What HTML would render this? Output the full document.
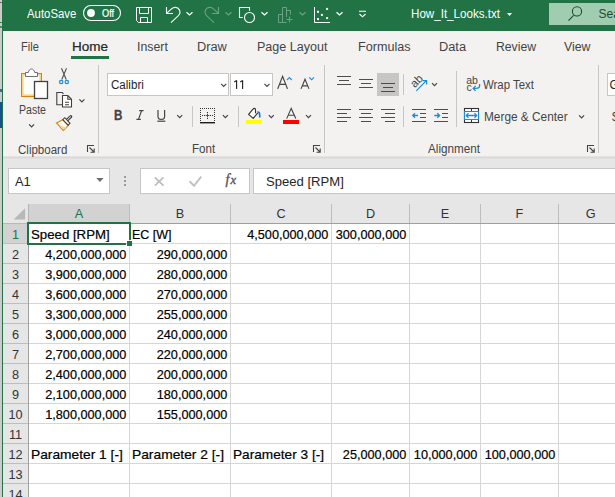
<!DOCTYPE html>
<html><head><meta charset="utf-8">
<style>
html,body{margin:0;padding:0;}
body{width:615px;height:497px;overflow:hidden;position:relative;font-family:"Liberation Sans", sans-serif;background:#e6e6e6;}
body>div,body>span{position:absolute;}
.t{position:absolute;white-space:nowrap;line-height:normal;}
.hdr{position:absolute;font-size:12.7px;text-align:center;line-height:normal;}
svg.ov{position:absolute;left:0;top:0;}
</style></head><body>
<div style="left:0px;top:0px;width:615px;height:497px;background:#e6e6e6;"></div><div style="left:0px;top:0px;width:615px;height:31px;background:#217346;"></div><div style="left:3px;top:31px;width:612px;height:126px;background:#f3f2f1;"></div><div style="left:3px;top:156px;width:612px;height:1px;background:#e4e3e2;"></div><div style="left:3px;top:157px;width:612px;height:1px;background:#d9d9d9;"></div><div style="left:3px;top:158px;width:612px;height:1px;background:#e0e0e0;"></div><span class="t" style="left:26.50px;top:7.03px;font-size:12px;color:#ffffff;transform:scaleX(0.9472);transform-origin:0 0;">AutoSave</span><span class="t" style="left:102.40px;top:7.74px;font-size:10px;color:#ffffff;transform:scaleX(0.9167);transform-origin:0 0;-webkit-text-stroke:0.2px #fff;">Off</span><span class="t" style="left:410.50px;top:7.23px;font-size:12px;color:#ffffff;transform:scaleX(0.9669);transform-origin:0 0;">How_It_Looks.txt</span><div style="left:549px;top:3px;width:66px;height:22px;background:#a0ccb0;"></div><span class="t" style="left:598.60px;top:6.73px;font-size:12px;color:#1d4b2e;">Sea</span><span class="t" style="left:20.50px;top:40.03px;font-size:12px;color:#444444;transform:scaleX(0.9199);transform-origin:0 0;">File</span><span class="t" style="left:71.80px;top:40.03px;font-size:12px;color:#262626;transform:scaleX(1.1250);transform-origin:0 0;-webkit-text-stroke:0.2px #262626;">Home</span><div style="left:71px;top:56px;width:38px;height:3px;background:#217346;"></div><span class="t" style="left:136.50px;top:40.03px;font-size:12px;color:#444444;transform:scaleX(1.0267);transform-origin:0 0;">Insert</span><span class="t" style="left:197.30px;top:40.03px;font-size:12px;color:#444444;transform:scaleX(1.0660);transform-origin:0 0;">Draw</span><span class="t" style="left:257.20px;top:40.03px;font-size:12px;color:#444444;transform:scaleX(1.0460);transform-origin:0 0;">Page Layout</span><span class="t" style="left:358.00px;top:40.03px;font-size:12px;color:#444444;transform:scaleX(1.0520);transform-origin:0 0;">Formulas</span><span class="t" style="left:439.40px;top:40.03px;font-size:12px;color:#444444;transform:scaleX(1.0669);transform-origin:0 0;">Data</span><span class="t" style="left:495.70px;top:40.03px;font-size:12px;color:#444444;transform:scaleX(1.0178);transform-origin:0 0;">Review</span><span class="t" style="left:563.70px;top:40.03px;font-size:12px;color:#444444;transform:scaleX(1.0290);transform-origin:0 0;">View</span><div style="left:98px;top:65px;width:1px;height:88px;background:#c8c6c4;"></div><div style="left:324px;top:65px;width:1px;height:88px;background:#c8c6c4;"></div><div style="left:598px;top:65px;width:1px;height:88px;background:#c8c6c4;"></div><div style="left:192px;top:106px;width:1px;height:21px;background:#c8c6c4;"></div><div style="left:238px;top:106px;width:1px;height:21px;background:#c8c6c4;"></div><div style="left:403px;top:74px;width:1px;height:21px;background:#c8c6c4;"></div><div style="left:403px;top:106px;width:1px;height:21px;background:#c8c6c4;"></div><div style="left:456px;top:71px;width:1px;height:56px;background:#c8c6c4;"></div><span class="t" style="left:18.70px;top:103.13px;font-size:12px;color:#444444;transform:scaleX(0.8795);transform-origin:0 0;">Paste</span><span class="t" style="left:17.90px;top:142.73px;font-size:12px;color:#444444;transform:scaleX(0.9601);transform-origin:0 0;">Clipboard</span><div style="left:107px;top:73px;width:122px;height:23px;background:#ffffff;box-sizing:border-box;border:1px solid #c8c6c4;"></div><span class="t" style="left:110.60px;top:78.03px;font-size:12px;color:#262626;transform:scaleX(0.9647);transform-origin:0 0;">Calibri</span><div style="left:230px;top:73px;width:43px;height:23px;background:#ffffff;box-sizing:border-box;border:1px solid #c8c6c4;"></div><span class="t" style="left:114.20px;top:106.76px;font-size:14.5px;color:#444444;font-weight:bold;transform:scaleX(0.8038);transform-origin:0 0;-webkit-text-stroke:0.3px #444;">B</span><div style="left:200px;top:122px;width:15px;height:1px;background:#1e1e1e;"></div><div style="left:200px;top:123px;width:15px;height:1px;background:#9a9a9a;"></div><div style="left:246px;top:120px;width:16px;height:4px;background:#ffff00;"></div><div style="left:283px;top:120px;width:16px;height:4px;background:#ff0000;"></div><span class="t" style="left:191.60px;top:142.23px;font-size:12px;color:#444444;transform:scaleX(0.9667);transform-origin:0 0;">Font</span><div style="left:377px;top:73px;width:22px;height:23px;background:#c8c6c4;"></div><div style="left:337px;top:76px;width:14px;height:1px;background:#444444;opacity:0.95;"></div><div style="left:339px;top:80px;width:10px;height:1px;background:#444444;opacity:0.95;"></div><div style="left:337px;top:84px;width:14px;height:1px;background:#444444;opacity:0.95;"></div><div style="left:359px;top:79px;width:14px;height:1px;background:#444444;opacity:0.95;"></div><div style="left:361px;top:83px;width:10px;height:1px;background:#444444;opacity:0.95;"></div><div style="left:359px;top:87px;width:14px;height:1px;background:#444444;opacity:0.95;"></div><div style="left:381px;top:83px;width:14px;height:1px;background:#444444;opacity:0.95;"></div><div style="left:383px;top:87px;width:10px;height:1px;background:#444444;opacity:0.95;"></div><div style="left:381px;top:91px;width:14px;height:1px;background:#444444;opacity:0.95;"></div><div style="left:337px;top:109px;width:14px;height:1px;background:#444444;opacity:0.95;"></div><div style="left:337px;top:113px;width:10px;height:1px;background:#444444;opacity:0.95;"></div><div style="left:337px;top:117px;width:14px;height:1px;background:#444444;opacity:0.95;"></div><div style="left:337px;top:121px;width:10px;height:1px;background:#444444;opacity:0.95;"></div><div style="left:359px;top:109px;width:14px;height:1px;background:#444444;opacity:0.95;"></div><div style="left:361px;top:113px;width:10px;height:1px;background:#444444;opacity:0.95;"></div><div style="left:359px;top:117px;width:14px;height:1px;background:#444444;opacity:0.95;"></div><div style="left:361px;top:121px;width:10px;height:1px;background:#444444;opacity:0.95;"></div><div style="left:381px;top:109px;width:14px;height:1px;background:#444444;opacity:0.95;"></div><div style="left:385px;top:113px;width:10px;height:1px;background:#444444;opacity:0.95;"></div><div style="left:381px;top:117px;width:14px;height:1px;background:#444444;opacity:0.95;"></div><div style="left:385px;top:121px;width:10px;height:1px;background:#444444;opacity:0.95;"></div><span class="t" style="left:410px;top:75px;font-size:11.5px;color:#444;transform:rotate(-45deg);transform-origin:50% 50%;">ab</span><div style="left:412px;top:109px;width:14px;height:1px;background:#444444;opacity:0.95;"></div><div style="left:412px;top:121px;width:14px;height:1px;background:#444444;opacity:0.95;"></div><div style="left:420px;top:113px;width:6px;height:1px;background:#444444;opacity:0.95;"></div><div style="left:420px;top:117px;width:6px;height:1px;background:#444444;opacity:0.95;"></div><div style="left:434px;top:109px;width:14px;height:1px;background:#444444;opacity:0.95;"></div><div style="left:434px;top:121px;width:14px;height:1px;background:#444444;opacity:0.95;"></div><div style="left:442px;top:113px;width:6px;height:1px;background:#444444;opacity:0.95;"></div><div style="left:442px;top:117px;width:6px;height:1px;background:#444444;opacity:0.95;"></div><span class="t" style="left:466.2px;top:73.6px;font-size:10.5px;color:#444;letter-spacing:0px;">ab</span><span class="t" style="left:466.4px;top:81.2px;font-size:10.5px;color:#444;">c</span><span class="t" style="left:483.20px;top:78.43px;font-size:12px;color:#444444;transform:scaleX(0.9515);transform-origin:0 0;">Wrap Text</span><span class="t" style="left:483.80px;top:110.43px;font-size:12px;color:#444444;transform:scaleX(0.9870);transform-origin:0 0;">Merge &amp; Center</span><span class="t" style="left:427.50px;top:141.83px;font-size:12px;color:#444444;transform:scaleX(0.9747);transform-origin:0 0;">Alignment</span><div style="left:607px;top:73px;width:10px;height:23px;background:#ffffff;box-sizing:border-box;border:1px solid #c8c6c4;"></div><span class="t" style="left:609.50px;top:78.03px;font-size:12px;color:#262626;">G</span><span class="t" style="left:612.00px;top:110.13px;font-size:12px;color:#444444;">$</span><div style="left:8px;top:168px;width:102px;height:26px;background:#ffffff;box-sizing:border-box;border:1px solid #c6c6c6;"></div><span class="t" style="left:15.00px;top:174.32px;font-size:13px;color:#262626;transform:scaleX(0.9937);transform-origin:0 0;">A1</span><div style="left:124px;top:175.6px;width:2px;height:2px;background:#9a9a9a;"></div><div style="left:124px;top:179.8px;width:2px;height:2px;background:#9a9a9a;"></div><div style="left:124px;top:184px;width:2px;height:2px;background:#9a9a9a;"></div><div style="left:140px;top:168px;width:110px;height:26px;background:#ffffff;box-sizing:border-box;border:1px solid #c6c6c6;"></div><span class="t" style="left:225.5px;top:172.3px;font-size:14px;color:#555;-webkit-text-stroke:0.35px #555;font-family:'Liberation Serif',serif;font-style:italic;">f<span style="font-size:12.5px;margin-left:1.2px">x</span></span><div style="left:253px;top:168px;width:370px;height:26px;background:#ffffff;box-sizing:border-box;border:1px solid #c6c6c6;"></div><span class="t" style="left:265.50px;top:174.22px;font-size:13px;color:#262626;transform:scaleX(1.0065);transform-origin:0 0;">Speed [RPM]</span><div style="left:29px;top:224px;width:586px;height:273px;background:#ffffff;"></div><div style="left:29px;top:204px;width:100px;height:19px;background:#d2d2d2;"></div><div style="left:3px;top:224px;width:25px;height:19px;background:#d2d2d2;"></div><div style="left:3px;top:223px;width:25px;height:1px;background:#b8b8b8;"></div><div style="left:28px;top:223px;width:587px;height:1px;background:#9f9f9f;"></div><div style="left:28px;top:204px;width:1px;height:19px;background:#b4b4b4;"></div><div style="left:28px;top:224px;width:1px;height:273px;background:#9f9f9f;"></div><div style="left:129px;top:204px;width:1px;height:19px;background:#bdbdbd;"></div><div style="left:230px;top:204px;width:1px;height:19px;background:#bdbdbd;"></div><div style="left:331px;top:204px;width:1px;height:19px;background:#bdbdbd;"></div><div style="left:409px;top:204px;width:1px;height:19px;background:#bdbdbd;"></div><div style="left:480px;top:204px;width:1px;height:19px;background:#bdbdbd;"></div><div style="left:558px;top:204px;width:1px;height:19px;background:#bdbdbd;"></div><div style="left:129px;top:224px;width:1px;height:273px;background:#d6d6d6;"></div><div style="left:230px;top:224px;width:1px;height:273px;background:#d6d6d6;"></div><div style="left:331px;top:224px;width:1px;height:273px;background:#d6d6d6;"></div><div style="left:409px;top:224px;width:1px;height:273px;background:#d6d6d6;"></div><div style="left:480px;top:224px;width:1px;height:273px;background:#d6d6d6;"></div><div style="left:558px;top:224px;width:1px;height:273px;background:#d6d6d6;"></div><div style="left:29px;top:243px;width:586px;height:1px;background:#d6d6d6;"></div><div style="left:3px;top:243px;width:25px;height:1px;background:#bdbdbd;"></div><div style="left:29px;top:263px;width:586px;height:1px;background:#d6d6d6;"></div><div style="left:3px;top:263px;width:25px;height:1px;background:#bdbdbd;"></div><div style="left:29px;top:283px;width:586px;height:1px;background:#d6d6d6;"></div><div style="left:3px;top:283px;width:25px;height:1px;background:#bdbdbd;"></div><div style="left:29px;top:303px;width:586px;height:1px;background:#d6d6d6;"></div><div style="left:3px;top:303px;width:25px;height:1px;background:#bdbdbd;"></div><div style="left:29px;top:323px;width:586px;height:1px;background:#d6d6d6;"></div><div style="left:3px;top:323px;width:25px;height:1px;background:#bdbdbd;"></div><div style="left:29px;top:343px;width:586px;height:1px;background:#d6d6d6;"></div><div style="left:3px;top:343px;width:25px;height:1px;background:#bdbdbd;"></div><div style="left:29px;top:363px;width:586px;height:1px;background:#d6d6d6;"></div><div style="left:3px;top:363px;width:25px;height:1px;background:#bdbdbd;"></div><div style="left:29px;top:383px;width:586px;height:1px;background:#d6d6d6;"></div><div style="left:3px;top:383px;width:25px;height:1px;background:#bdbdbd;"></div><div style="left:29px;top:403px;width:586px;height:1px;background:#d6d6d6;"></div><div style="left:3px;top:403px;width:25px;height:1px;background:#bdbdbd;"></div><div style="left:29px;top:423px;width:586px;height:1px;background:#d6d6d6;"></div><div style="left:3px;top:423px;width:25px;height:1px;background:#bdbdbd;"></div><div style="left:29px;top:443px;width:586px;height:1px;background:#d6d6d6;"></div><div style="left:3px;top:443px;width:25px;height:1px;background:#bdbdbd;"></div><div style="left:29px;top:463px;width:586px;height:1px;background:#d6d6d6;"></div><div style="left:3px;top:463px;width:25px;height:1px;background:#bdbdbd;"></div><div style="left:29px;top:483px;width:586px;height:1px;background:#d6d6d6;"></div><div style="left:3px;top:483px;width:25px;height:1px;background:#bdbdbd;"></div><div class="hdr" style="left:49.0px;top:207px;width:60px;color:#217346">A</div><div class="hdr" style="left:150.0px;top:207px;width:60px;color:#333333">B</div><div class="hdr" style="left:251.0px;top:207px;width:60px;color:#333333">C</div><div class="hdr" style="left:340.5px;top:207px;width:60px;color:#333333">D</div><div class="hdr" style="left:415.0px;top:207px;width:60px;color:#333333">E</div><div class="hdr" style="left:489.5px;top:207px;width:60px;color:#333333">F</div><div class="hdr" style="left:560.7px;top:207px;width:60px;color:#333333">G</div><div class="hdr" style="left:3px;top:228px;width:25px;color:#217346">1</div><div class="hdr" style="left:3px;top:248px;width:25px;color:#333333">2</div><div class="hdr" style="left:3px;top:268px;width:25px;color:#333333">3</div><div class="hdr" style="left:3px;top:288px;width:25px;color:#333333">4</div><div class="hdr" style="left:3px;top:308px;width:25px;color:#333333">5</div><div class="hdr" style="left:3px;top:328px;width:25px;color:#333333">6</div><div class="hdr" style="left:3px;top:348px;width:25px;color:#333333">7</div><div class="hdr" style="left:3px;top:368px;width:25px;color:#333333">8</div><div class="hdr" style="left:3px;top:388px;width:25px;color:#333333">9</div><div class="hdr" style="left:3px;top:408px;width:25px;color:#333333">10</div><div class="hdr" style="left:3px;top:428px;width:25px;color:#333333">11</div><div class="hdr" style="left:3px;top:448px;width:25px;color:#333333">12</div><div class="hdr" style="left:3px;top:468px;width:25px;color:#333333">13</div><div class="hdr" style="left:3px;top:488px;width:25px;color:#333333">14</div><span class="t" style="left:31.30px;top:227.69px;font-size:12.7px;color:#000000;transform:scaleX(1.0430);transform-origin:0 0;-webkit-text-stroke:0.2px #000;">Speed [RPM]</span><span class="t" style="left:132.30px;top:227.69px;font-size:12.7px;color:#000000;transform:scaleX(0.9826);transform-origin:0 0;-webkit-text-stroke:0.2px #000;">EC [W]</span><span class="t" style="left:247.20px;top:227.69px;font-size:12.7px;color:#000000;-webkit-text-stroke:0.2px #000;">4,500,000,000</span><span class="t" style="left:335.75px;top:227.69px;font-size:12.7px;color:#000000;-webkit-text-stroke:0.2px #000;">300,000,000</span><span class="t" style="left:31.30px;top:447.69px;font-size:12.7px;color:#000000;transform:scaleX(1.0850);transform-origin:0 0;-webkit-text-stroke:0.2px #000;">Parameter 1 [-]</span><span class="t" style="left:132.30px;top:447.69px;font-size:12.7px;color:#000000;transform:scaleX(1.0874);transform-origin:0 0;-webkit-text-stroke:0.2px #000;">Parameter 2 [-]</span><span class="t" style="left:233.30px;top:447.69px;font-size:12.7px;color:#000000;transform:scaleX(1.0756);transform-origin:0 0;-webkit-text-stroke:0.2px #000;">Parameter 3 [-]</span><span class="t" style="left:342.85px;top:447.69px;font-size:12.7px;color:#000000;-webkit-text-stroke:0.2px #000;">25,000,000</span><span class="t" style="left:413.85px;top:447.69px;font-size:12.7px;color:#000000;-webkit-text-stroke:0.2px #000;">10,000,000</span><span class="t" style="left:484.75px;top:447.69px;font-size:12.7px;color:#000000;-webkit-text-stroke:0.2px #000;">100,000,000</span><span class="t" style="left:45.20px;top:247.69px;font-size:12.7px;color:#000000;-webkit-text-stroke:0.2px #000;">4,200,000,000</span><span class="t" style="left:156.75px;top:247.69px;font-size:12.7px;color:#000000;-webkit-text-stroke:0.2px #000;">290,000,000</span><span class="t" style="left:45.20px;top:267.69px;font-size:12.7px;color:#000000;-webkit-text-stroke:0.2px #000;">3,900,000,000</span><span class="t" style="left:156.75px;top:267.69px;font-size:12.7px;color:#000000;-webkit-text-stroke:0.2px #000;">280,000,000</span><span class="t" style="left:45.20px;top:287.69px;font-size:12.7px;color:#000000;-webkit-text-stroke:0.2px #000;">3,600,000,000</span><span class="t" style="left:156.75px;top:287.69px;font-size:12.7px;color:#000000;-webkit-text-stroke:0.2px #000;">270,000,000</span><span class="t" style="left:45.20px;top:307.69px;font-size:12.7px;color:#000000;-webkit-text-stroke:0.2px #000;">3,300,000,000</span><span class="t" style="left:156.75px;top:307.69px;font-size:12.7px;color:#000000;-webkit-text-stroke:0.2px #000;">255,000,000</span><span class="t" style="left:45.20px;top:327.69px;font-size:12.7px;color:#000000;-webkit-text-stroke:0.2px #000;">3,000,000,000</span><span class="t" style="left:156.75px;top:327.69px;font-size:12.7px;color:#000000;-webkit-text-stroke:0.2px #000;">240,000,000</span><span class="t" style="left:45.20px;top:347.69px;font-size:12.7px;color:#000000;-webkit-text-stroke:0.2px #000;">2,700,000,000</span><span class="t" style="left:156.75px;top:347.69px;font-size:12.7px;color:#000000;-webkit-text-stroke:0.2px #000;">220,000,000</span><span class="t" style="left:45.20px;top:367.69px;font-size:12.7px;color:#000000;-webkit-text-stroke:0.2px #000;">2,400,000,000</span><span class="t" style="left:156.75px;top:367.69px;font-size:12.7px;color:#000000;-webkit-text-stroke:0.2px #000;">200,000,000</span><span class="t" style="left:45.20px;top:387.69px;font-size:12.7px;color:#000000;-webkit-text-stroke:0.2px #000;">2,100,000,000</span><span class="t" style="left:156.75px;top:387.69px;font-size:12.7px;color:#000000;-webkit-text-stroke:0.2px #000;">180,000,000</span><span class="t" style="left:45.20px;top:407.69px;font-size:12.7px;color:#000000;-webkit-text-stroke:0.2px #000;">1,800,000,000</span><span class="t" style="left:156.75px;top:407.69px;font-size:12.7px;color:#000000;-webkit-text-stroke:0.2px #000;">155,000,000</span><div style="left:27px;top:222px;width:104px;height:2px;background:#217346;"></div><div style="left:27px;top:243px;width:99px;height:2px;background:#217346;"></div><div style="left:27px;top:222px;width:2px;height:23px;background:#217346;"></div><div style="left:129px;top:222px;width:2px;height:18px;background:#217346;"></div><div style="left:127px;top:241px;width:5px;height:5px;background:#217346;"></div><div style="left:126px;top:240px;width:1px;height:1px;background:#ffffff;"></div><div style="left:0px;top:0px;width:2px;height:497px;background:#cbcbcb;"></div><div style="left:0px;top:2px;width:2px;height:1px;background:#6a6a6a;"></div><div style="left:0px;top:22px;width:2px;height:1px;background:#2c8a4f;"></div><div style="left:0px;top:26px;width:2px;height:2px;background:#3a9a5c;"></div><div style="left:0px;top:89px;width:2px;height:3px;background:#2f6db0;"></div><div style="left:0px;top:102px;width:2px;height:26px;background:#16508f;"></div><div style="left:2px;top:0px;width:1px;height:497px;background:#217346;"></div>
<svg class="ov" width="615" height="497" viewBox="0 0 615 497"><rect x="83.5" y="5.5" width="37" height="15" rx="7.5" fill="none" stroke="#fff" stroke-width="1.1"/><circle cx="91" cy="13" r="3.9" fill="#fff"/><path d="M136.5 7.5H151.5V22.5H138.5L136.5 20.5Z M139.5 7.5V13.5H148.5V7.5 M140.5 22.5V17.5H147.5V22.5" fill="none" stroke="#ffffff" stroke-width="1"/><path d="M166.5 7V13.5H173 M166.8 13.2L171.5 8.8C174 6.6 177.6 7 179.2 9.6C180.4 11.6 180 14 178.4 15.6L171 22.6" fill="none" stroke="#ffffff" stroke-width="1.1"/><path d="M186.5 12.3L189.5 15L192.5 12.3" fill="none" stroke="#ffffff" stroke-width="1.2"/><path d="M218.5 7V13.5H212 M218.2 13.2L213.5 8.8C211 6.6 207.4 7 205.8 9.6C204.6 11.6 205 14 206.6 15.6L214 22.6" fill="none" stroke="#6aa383" stroke-width="1.1"/><path d="M225.5 12.3L228.5 15L231.5 12.3" fill="none" stroke="#6aa383" stroke-width="1.2"/><path d="M242.8 17.5H239.5V7.5H249.5V10.8" fill="none" stroke="#ffffff" stroke-width="1.1"/><circle cx="249.5" cy="17.5" r="5" fill="none" stroke="#ffffff" stroke-width="1.1"/><path d="M261.5 12.3L264.5 15L267.5 12.3" fill="none" stroke="#ffffff" stroke-width="1.2"/><path d="M278.5 22.5V14.5H282.5 M282.5 22.5V7.5H286.5V17 M286.5 10.5H290.5V14.5 M278.5 22.5H286.5 M286.5 19.5H292.5 M289.5 16.5V22.5" fill="none" stroke="#6aa383" stroke-width="1"/><path d="M299.5 12.3L302.5 15L305.5 12.3" fill="none" stroke="#6aa383" stroke-width="1.2"/><path d="M314.5 7V22.5H330" fill="none" stroke="#ffffff" stroke-width="1"/><rect x="317" y="10.8" width="2" height="2" fill="#ffffff"/><rect x="326.1" y="7.9" width="2" height="2" fill="#ffffff"/><rect x="320.9" y="13.9" width="2" height="2" fill="#ffffff"/><rect x="326.1" y="17.1" width="2" height="2" fill="#ffffff"/><rect x="317" y="18.1" width="2" height="2" fill="#ffffff"/><path d="M336.5 12.3L339.5 15L342.5 12.3" fill="none" stroke="#ffffff" stroke-width="1.2"/><path d="M359 11.3H366 M359.5 14L362.5 16.8L365.5 14" fill="none" stroke="#ffffff" stroke-width="1.1"/><path d="M507 13H512L509.5 16Z" fill="#ffffff"/><circle cx="577" cy="11.4" r="4.6" fill="none" stroke="#1d4b2e" stroke-width="1.1"/><path d="M568.5 20.6L573.6 15.4" stroke="#1d4b2e" stroke-width="1.1"/><rect x="21.5" y="73.5" width="20" height="23" fill="#fdfdfd" stroke="#e47d0e" stroke-width="1"/><rect x="22.8" y="74.8" width="17.4" height="20.4" fill="none" stroke="#f9d07c" stroke-width="1.5"/><path d="M25.5 76.5V72.5H28.3C28.8 70.3 30 69 31.5 69C33 69 34.2 70.3 34.7 72.5H37.5V76.5Z" fill="#fff" stroke="#6e6e6e" stroke-width="1"/><rect x="34.5" y="81.5" width="13" height="17" fill="#fdfdfd" stroke="#404040" stroke-width="1.3"/><path d="M29.1 124.3L31.6 126.8L34.1 124.3" fill="none" stroke="#444444" stroke-width="1.2"/><path d="M61.5 68.3L66.2 79.5 M66.5 68.3L61.8 79.5" fill="none" stroke="#505050" stroke-width="1.1"/><circle cx="61.2" cy="82" r="1.7" fill="none" stroke="#1e8bcd" stroke-width="1.2"/><circle cx="66.8" cy="82" r="1.7" fill="none" stroke="#1e8bcd" stroke-width="1.2"/><path d="M62.5 104.8H56.8V92.5H62.2L63.5 93.8" fill="none" stroke="#404040" stroke-width="1.1"/><path d="M62.5 107V95.5H67.8L71.5 99.2V107Z M67.8 95.5V99.2H71.5 M65 102.3H69 M65 104.8H69" fill="#fff" stroke="#404040" stroke-width="1.1"/><path d="M79.4 99.3L81.9 101.8L84.4 99.3" fill="none" stroke="#444444" stroke-width="1.2"/><path d="M56.5 123L62.8 119.8L68.3 125.6L63.3 130.3Z" fill="#fff" stroke="#e47d0e" stroke-width="1.2"/><path d="M59.2 125.3L66.8 127.4L63.3 129.8Z" fill="#fcd88c"/><path d="M66.8 120.4L70.8 116.6" fill="none" stroke="#404040" stroke-width="3" stroke-linecap="round"/><path d="M67 120.2L70.6 116.8" fill="none" stroke="#ffffff" stroke-width="1" stroke-linecap="round"/><path d="M62.8 119.6L64.8 117.7L70 123.3L68.1 125.2Z" fill="#fff" stroke="#404040" stroke-width="1.1"/><path d="M87.5 152V145.5H94 M89.5 147.5L94 152 M94.2 148.5V152.2H90.5" fill="none" stroke="#444444" stroke-width="1.1"/><path d="M221.2 83.89999999999999L223.7 86.39999999999999L226.2 83.89999999999999" fill="none" stroke="#444444" stroke-width="1.2"/><path d="M236.6 80.2V88.9 M234.2 81.9L236.6 80.4 M242.6 80.2V88.9 M240.2 81.9L242.6 80.4" fill="none" stroke="#262626" stroke-width="1.15"/><path d="M264.5 83.89999999999999L267 86.39999999999999L269.5 83.89999999999999" fill="none" stroke="#444444" stroke-width="1.2"/><path d="M277.7 88.9L282.6 76.3L287.5 88.9 M279.5 84.4H285.7" fill="none" stroke="#444" stroke-width="1.2"/><path d="M287 80L289.4 77.6L291.8 80" fill="none" stroke="#2b8fd6" stroke-width="1.2"/><path d="M301 88.9L305 79.3L309 88.9 M302.5 85.8H307.5" fill="none" stroke="#444" stroke-width="1.15"/><path d="M309.2 77.3L311.6 79.7L314 77.3" fill="none" stroke="#2b8fd6" stroke-width="1.2"/><path d="M139.2 110.6H143.6 M136.4 119.4H140.8 M141.6 110.6L138.5 119.4" fill="none" stroke="#444444" stroke-width="1.2"/><path d="M158 110V116.5Q158 119.4 161.3 119.4Q164.6 119.4 164.6 116.5V110" fill="none" stroke="#444444" stroke-width="1.2"/><rect x="157.3" y="120.6" width="8" height="1.2" fill="#444444"/><path d="M177.2 115.2L179.7 117.7L182.2 115.2" fill="none" stroke="#444444" stroke-width="1.2"/><rect x="200" y="108" width="1" height="1" fill="#333"/><rect x="202" y="108" width="1" height="1" fill="#333"/><rect x="204" y="108" width="1" height="1" fill="#333"/><rect x="206" y="108" width="1" height="1" fill="#333"/><rect x="208" y="108" width="1" height="1" fill="#333"/><rect x="210" y="108" width="1" height="1" fill="#333"/><rect x="212" y="108" width="1" height="1" fill="#333"/><rect x="214" y="108" width="1" height="1" fill="#333"/><rect x="200" y="110" width="1" height="1" fill="#333"/><rect x="214" y="110" width="1" height="1" fill="#333"/><rect x="200" y="112" width="1" height="1" fill="#333"/><rect x="214" y="112" width="1" height="1" fill="#333"/><rect x="200" y="114" width="1" height="1" fill="#333"/><rect x="214" y="114" width="1" height="1" fill="#333"/><rect x="200" y="116" width="1" height="1" fill="#333"/><rect x="214" y="116" width="1" height="1" fill="#333"/><rect x="200" y="118" width="1" height="1" fill="#333"/><rect x="214" y="118" width="1" height="1" fill="#333"/><rect x="200" y="120" width="1" height="1" fill="#333"/><rect x="214" y="120" width="1" height="1" fill="#333"/><rect x="202" y="115" width="1" height="1" fill="#333"/><rect x="204" y="115" width="1" height="1" fill="#333"/><rect x="210" y="115" width="1" height="1" fill="#333"/><rect x="212" y="115" width="1" height="1" fill="#333"/><rect x="207" y="112" width="1" height="1" fill="#333"/><rect x="207" y="118" width="1" height="1" fill="#333"/><path d="M207.5 113.6V117.4 M205.6 115.5H209.4" stroke="#444" stroke-width="0.9"/><path d="M222.9 115.2L225.4 117.7L227.9 115.2" fill="none" stroke="#444444" stroke-width="1.2"/><path d="M255.5 113.3V109.7Q255.5 108.4 254.4 108.4Q253.6 108.4 253 109.2L248.6 114.4L253.2 118.4L257.8 112.9" fill="#fff" stroke="#333" stroke-width="1.15" stroke-linejoin="round"/><path d="M257.4 112.1Q259.6 111.6 259.7 115V117.6" fill="none" stroke="#1f74c4" stroke-width="1.7"/><path d="M268.8 115.2L271.3 117.7L273.8 115.2" fill="none" stroke="#444444" stroke-width="1.2"/><path d="M286.7 118.6L291.2 108.4L295.8 118.6 M288.4 115.2H294" fill="none" stroke="#444444" stroke-width="1.1"/><path d="M306.0 115.2L308.5 117.7L311.0 115.2" fill="none" stroke="#444444" stroke-width="1.2"/><path d="M313.5 152V145.5H320 M315.5 147.5L320 152 M320.2 148.5V152.2H316.5" fill="none" stroke="#444444" stroke-width="1.1"/><path d="M416.3 90.8L426.6 80.4 M422.8 80.6H426.6V84.4" fill="none" stroke="#1e8bcd" stroke-width="1.2"/><path d="M432.0 83.1L434.5 85.6L437.0 83.1" fill="none" stroke="#444444" stroke-width="1.2"/><path d="M418 115.5H412.8 M415 113.2L412.7 115.5L415 117.8" fill="none" stroke="#1e8bcd" stroke-width="1.3"/><path d="M434.3 115.5H439.5 M437.3 113.2L439.6 115.5L437.3 117.8" fill="none" stroke="#1e8bcd" stroke-width="1.3"/><path d="M479.6 84V85.8Q479.6 88.4 476 88.4H473.2 M475.7 85.9L473.2 88.4L475.7 90.9" fill="none" stroke="#1e8bcd" stroke-width="1.3"/><rect x="464.5" y="108.5" width="14" height="14" fill="#fff" stroke="#333" stroke-width="1.1"/><path d="M471.5 108.5V111.5 M471.5 119.5V122.5" stroke="#333" stroke-width="1"/><rect x="464.5" y="111.5" width="14" height="8" fill="#fff" stroke="#1e8bcd" stroke-width="1.1"/><path d="M466.5 115.5H476.5 M468.5 113.3L466.3 115.5L468.5 117.7 M474.5 113.3L476.7 115.5L474.5 117.7" fill="none" stroke="#1e8bcd" stroke-width="1.3"/><path d="M579.1 115.3L581.6 117.8L584.1 115.3" fill="none" stroke="#444444" stroke-width="1.2"/><path d="M587.5 152V145.5H594 M589.5 147.5L594 152 M594.2 148.5V152.2H590.5" fill="none" stroke="#444444" stroke-width="1.1"/><path d="M96.3 178H103.5L99.9 182Z" fill="#6d6d6d"/><path d="M154.9 177.3L163.5 185.6 M163.5 177.3L154.9 185.6" stroke="#bcbcbc" stroke-width="1.7"/><path d="M189.6 181.3L194 185.8L201.2 176.6" fill="none" stroke="#c2c2c2" stroke-width="2"/><path d="M13.6 219.6H25.1V208.2Z" fill="#b8b8b8"/></svg>
</body></html>
